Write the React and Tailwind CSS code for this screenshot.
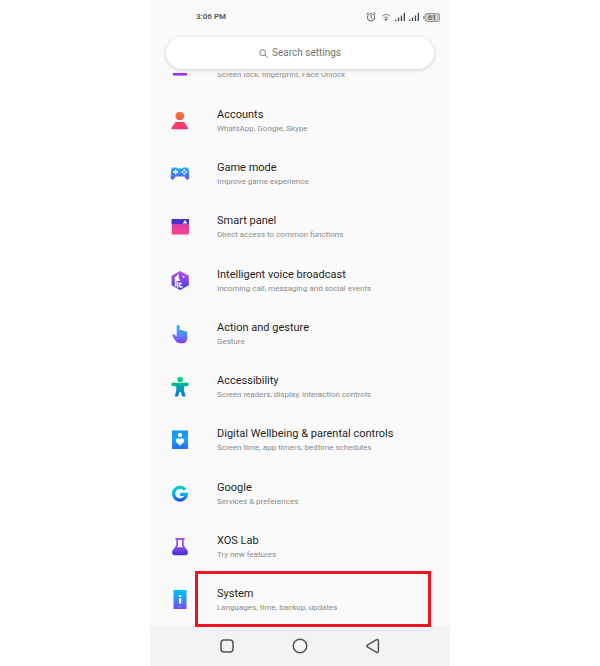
const settings = [
    { title: 'Accounts', summary: 'WhatsApp, Google, Skype', Icon: AccountsIcon },
    { title: 'Game mode', summary: 'Improve game experience', Icon: GameIcon },
    { title: 'Smart panel', summary: 'Direct access to common functions', Icon: PanelIcon },
    { title: 'Intelligent voice broadcast', summary: 'Incoming call, messaging and social events', Icon: VoiceIcon },
    { title: 'Action and gesture', summary: 'Gesture', Icon: GestureIcon },
    { title: 'Accessibility', summary: 'Screen readers, display, interaction controls', Icon: AccessibilityIcon },
    { title: 'Digital Wellbeing & parental controls', summary: 'Screen time, app timers, bedtime schedules', Icon: WellbeingIcon },
    { title: 'Google', summary: 'Services & preferences', Icon: GoogleIcon },
    { title: 'XOS Lab', summary: 'Try new features', Icon: LabIcon },
    { title: 'System', summary: 'Languages, time, backup, updates', Icon: SystemIcon, highlighted: true },
];

// Every settings icon is a 24px drawing filled with a vertical gradient
function GradientIcon({ id, stops, children }) {
    return (
        <svg viewBox="0 0 24 24" className="size-6 shrink-0" aria-hidden="true">
            <defs>
                <linearGradient id={id} gradientUnits="userSpaceOnUse" x1="12" y1="3" x2="12" y2="21">
                    {stops.map((color, i) => (
                        <stop key={color} offset={i / (stops.length - 1)} stopColor={color} />
                    ))}
                </linearGradient>
            </defs>
            {children}
        </svg>
    );
}

function SecurityIcon() {
    return (
        <GradientIcon id="security" stops={['#6a3df5', '#a431ee']}>
            <path fill="url(#security)" d="M5 3h14v15.600H5z" />
        </GradientIcon>
    );
}

function AccountsIcon() {
    return (
        <GradientIcon id="accounts" stops={['#ff7a2f', '#fb4a55', '#ff2d78']}>
            <path fill="url(#accounts)" d="M9.800 3h4L16 5v3.800L13.800 11h-4L7.600 8.800V5zM7.500 13h8.700l3.900 6v1.300H3.400V19z" />
        </GradientIcon>
    );
}

function GameIcon() {
    return (
        <GradientIcon id="game" stops={['#12b8ff', '#3b86fb', '#8a35f5']}>
            <path
                fill="url(#game)"
                d="M5.500 5.500h3l1.200 1h4.600l1.200-1h3c1.500 0 2.300 1.500 2.500 3.500l.3 6c.1 1.800-.8 2.800-1.800 2.800-1.200 0-1.800-1-3-3.300h-9c-1.200 2.300-1.800 3.300-3 3.300-1 0-1.900-1-1.800-2.800L3 9c.2-2 1-3.500 2.500-3.500z"
            />
            <path stroke="#fff" strokeWidth="1.300" d="M7.700 7.500v5M5.200 10h5" />
            <g fill="#fff">
                <circle cx="16.300" cy="8.200" r=".9" />
                <circle cx="16.300" cy="11.800" r=".9" />
                <circle cx="14.500" cy="10" r=".9" />
                <circle cx="18.100" cy="10" r=".9" />
            </g>
        </GradientIcon>
    );
}

function PanelIcon() {
    return (
        <GradientIcon id="panel" stops={['#8a3fd0', '#e83fa0', '#ff4580']}>
            <path fill="url(#panel)" d="M3.700 4H21v15.500H3.700z" />
            <path fill="#4a2fcf" d="M3.700 4H21v5H3.700z" />
            <path fill="#fff" d="M17 5l2.300 3.500h-4.600z" />
        </GradientIcon>
    );
}

function VoiceIcon() {
    return (
        <GradientIcon id="voice" stops={['#b44df5', '#7a45f0', '#3a3be8']}>
            <path fill="url(#voice)" d="M12.200 2l8.600 4.700v9.600L12.200 21l-8.600-4.700V6.700z" />
            <path fill="#fff" d="M10.700 5v3.500l1.500 3.500H8.500v6l-1.700-1V9H6z" />
            <path fill="none" stroke="#fff" strokeWidth="1.300" d="M9.800 13v5.700M12 18h2.500M14 14.500h-2.300V18" />
            <circle cx="15.500" cy="7.700" r="1" fill="#fff" />
        </GradientIcon>
    );
}

function GestureIcon() {
    return (
        <GradientIcon id="gesture" stops={['#1fb6ff', '#4f8dfa', '#8a3cf0']}>
            <path
                fill="url(#gesture)"
                d="M8.700 4.300c0-1.900 2.900-1.900 2.900 0v4c.6-.8 2.300-.7 2.600.5.600-.7 2.200-.5 2.500.6.900-.5 2.600 0 2.600 1.400v5.200c0 3.500-2 5.300-4.800 5.300h-2.500c-2.200 0-3.700-1-5-3l-2.400-4c-.8-1.500.8-2.600 2-1.600l2.100 1.700z"
            />
        </GradientIcon>
    );
}

function AccessibilityIcon() {
    return (
        <GradientIcon id="accessibility" stops={['#00d778', '#00aaa8', '#0a72f0']}>
            <circle cx="12.200" cy="4.500" r="2.800" fill="url(#accessibility)" />
            <path fill="url(#accessibility)" d="M3.500 7.800h17v3l-4.500.7v4l1.600 6h-3.300L12.800 17h-1.300L10 21.500H6.700l1.600-6v-4l-4.800-.7z" />
        </GradientIcon>
    );
}

function WellbeingIcon() {
    return (
        <GradientIcon id="wellbeing" stops={['#1a92fb', '#12a4ff', '#2a66f5']}>
            <path fill="url(#wellbeing)" d="M4 2.500h16V21H4z" />
            <circle cx="12" cy="7" r="2.200" fill="#fff" />
            <path fill="#fff" d="M12 11.400c1.500-2.300 4.600-1 4.200 1.400-.3 1.700-2.400 3-4.200 4.900-1.800-1.900-3.900-3.200-4.200-4.900-.4-2.400 2.700-3.700 4.200-1.400z" />
        </GradientIcon>
    );
}

function GoogleIcon() {
    return (
        <GradientIcon id="google" stops={['#00d5d0', '#00b4f5', '#2a2ff0']}>
            <path fill="none" stroke="url(#google)" strokeWidth="3.200" d="M17.100 7.700a6.400 6.400 0 1 0 1.300 4.700h-6.200" />
        </GradientIcon>
    );
}

function LabIcon() {
    return (
        <GradientIcon id="lab" stops={['#b04df0', '#8a48e8', '#3a32d0']}>
            <path fill="url(#lab)" d="M7.300 3h9.400v1.700h-1v5.600l4.200 6v2.400l-1.600 1.600H5.700l-1.600-1.600v-2.400l4.200-6V4.700h-1z" />
            <path fill="#fafafa" d="M10 5h4v5.800l1 1.500H9l1-1.500z" />
        </GradientIcon>
    );
}

function SystemIcon() {
    return (
        <GradientIcon id="system" stops={['#00bfff', '#2f8ffa', '#8a3cf0']}>
            <path fill="url(#system)" d="M5.500 2h13v19h-13z" />
            <path fill="#fff" d="M11 7h2.300v2H11zM11 10.200h2.300v5.200H11z" />
            <path fill="#35b7ff" d="M10.300 18.300H14v1h-3.700z" />
        </GradientIcon>
    );
}

function StatusBar() {
    return (
        <div className="flex h-[34px] items-center justify-between pr-2.5 pl-[46px] text-[#555]">
            <span className="text-[8px] leading-3 font-semibold">3:06 PM</span>
            <div className="flex items-center gap-1">
                <svg viewBox="0 0 10 10" className="mr-px size-2.5" fill="none" stroke="#666">
                    <circle cx="5" cy="5.300" r="3.700" />
                    <path d="M5 3v2.500l1.500 1M.4 2.300L2.400.6M9.600 2.300L7.600.6" />
                </svg>
                <svg viewBox="0 0 10 8" className="h-2 w-2.5" fill="none" stroke="#888">
                    <path d="M1 3.200c2.500-2.300 5.500-2.300 8 0M2.600 5c1.500-1.300 3.300-1.300 4.800 0" />
                    <path fill="#444" stroke="none" d="M3.500 6c1-.8 2-.8 3 0L5 8z" />
                </svg>
                <SignalIcon />
                <SignalIcon />
                <svg viewBox="0 0 17 9" className="h-[9px] w-[17px]">
                    <path fill="#999" d="M0 3h1.500v3H0z" />
                    <rect x="2" y=".5" width="14.500" height="8" rx="2" fill="#ccc" stroke="#999" />
                    <text x="9" y="7" textAnchor="middle" fontSize="7" fontWeight="700" fill="#666">61</text>
                </svg>
            </div>
        </div>
    );
}

function SignalIcon() {
    return (
        <svg viewBox="0 0 10 8" className="h-2 w-2.5" fill="#444">
            <path d="M0 6.500h1.300V8H0zM2.900 4.500h1.300V8H2.900zM5.800 2.500h1.300V8H5.800zM8.700 0H10v8H8.700z" />
        </svg>
    );
}

function SettingText({ title, summary }) {
    return (
        <span className="flex flex-col whitespace-nowrap">
            {title && <span className="text-[11px] leading-4 text-[#1f1f1f]">{title}</span>}
            <span className="text-[8px] leading-3 text-[#8a8a8a]">{summary}</span>
        </span>
    );
}

export default function App() {
    return (
        <div className="min-h-screen bg-white font-[Roboto,sans-serif]">
            <main className="mx-auto flex min-h-screen w-1/2 min-w-[300px] flex-col bg-[#fafafa]">
                <header className="pb-1">
                    <StatusBar />
                    <label className="mx-4 mt-[3px] flex h-8 items-center justify-center gap-1 rounded-full bg-white shadow-[0_1px_4px_rgba(0,0,0,0.18)]">
                        <svg viewBox="0 0 9 9" className="size-[9px]" fill="none" stroke="#757575">
                            <circle cx="3.700" cy="3.700" r="2.900" />
                            <path d="M5.800 5.800L8.500 8.500" />
                        </svg>
                        <input
                            type="text"
                            aria-label="Search settings"
                            placeholder="Search settings"
                            className="field-sizing-content bg-transparent text-[10px] leading-4 outline-none placeholder:text-[#757575]"
                        />
                    </label>
                </header>

                {/* Row that is scrolled halfway under the search bar */}
                <div className="flex h-5 items-end overflow-hidden pb-3 pl-[18px]">
                    <a href="#security" className="flex items-end gap-[25px]">
                        <SecurityIcon />
                        <SettingText summary="Screen lock, fingerprint, Face Unlock" />
                    </a>
                </div>

                <ul className="grid flex-1 auto-rows-fr">
                    {settings.map(({ title, summary, Icon, highlighted }) => (
                        <li key={title} className="relative">
                            <a href="#settings" className="flex h-full items-center gap-[25px] pt-0.5 pl-[18px]">
                                <Icon />
                                <SettingText title={title} summary={summary} />
                            </a>
                            {highlighted && (
                                <span className="pointer-events-none absolute -top-0.5 right-[19px] -bottom-px left-[45px] z-10 border-3 border-[#ed1420]" />
                            )}
                        </li>
                    ))}
                </ul>

                <nav className="flex h-10 items-center justify-center gap-[57px] bg-[#f3f3f3]">
                    <button type="button" aria-label="Recent apps">
                        <svg viewBox="0 0 16 16" className="size-4" fill="none" stroke="#555" strokeWidth="1.500">
                            <rect x="2" y="2" width="12" height="12" rx="3" />
                        </svg>
                    </button>
                    <button type="button" aria-label="Home">
                        <svg viewBox="0 0 16 16" className="size-4" fill="none" stroke="#555" strokeWidth="1.500">
                            <circle cx="8" cy="8" r="6.800" />
                        </svg>
                    </button>
                    <button type="button" aria-label="Back">
                        <svg viewBox="0 0 16 16" className="size-4" fill="none" stroke="#555" strokeWidth="1.500" strokeLinejoin="round">
                            <path d="M2.300 7.100L11.700 1.700c.8-.4 1.700 0 1.700 1v10.600c0 1-.9 1.400-1.700 1L2.300 8.900c-.8-.5-.8-1.300 0-1.800z" />
                        </svg>
                    </button>
                </nav>
            </main>
        </div>
    );
}
